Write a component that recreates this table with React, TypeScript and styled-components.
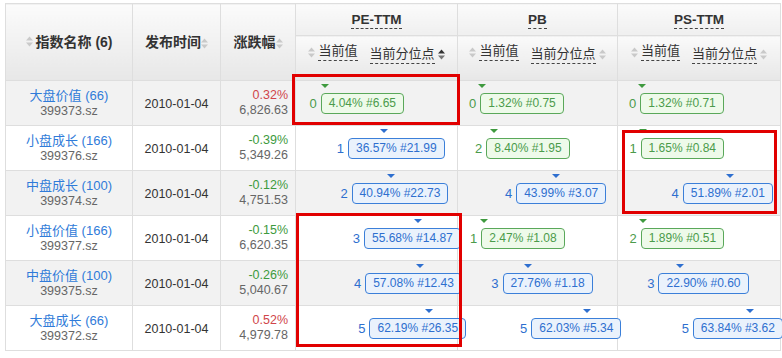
import React from 'react';
import styled, { createGlobalStyle } from 'styled-components';

const Global = createGlobalStyle`
  html, body { margin: 0; padding: 0; background: #fff; }
  body { font-family: "Liberation Sans", "Noto Sans CJK SC", Arial, sans-serif; color: #333; }
`;

const Page = styled.div`
  position: relative;
  width: 782px;
  height: 358px;
  padding: 3px 0 0 5px;
  box-sizing: border-box;
  overflow: hidden;
`;

const Table = styled.table`
  border-collapse: collapse;
  table-layout: fixed;
  width: 775px;
  font-size: 13px;
`;

const HeadCell = styled.th<{ $tall?: boolean }>`
  border: 1px solid #dedede;
  background: linear-gradient(180deg, #fbfbfb 0%, ${p => (p.$tall ? '#e7e7e7' : '#efefef')} 100%);
  font-weight: bold;
  font-size: 14px;
  color: #333;
  height: ${p => (p.$tall ? '76px' : '31px')};
  padding: 0;
  text-align: center;
  vertical-align: middle;
  white-space: nowrap;
  line-height: 18px;
`;

const GroupTitle = styled.span`
  font-size: 13.5px;
  border-bottom: 1px dashed #444;
  padding-bottom: 1px;
`;

const SubHeadCell = styled.th`
  border: 1px solid #dedede;
  border-top: 1px solid #e2e2e2;
  background: linear-gradient(180deg, #fafafa 0%, #e7e7e7 100%);
  font-weight: normal;
  font-size: 13px;
  color: #333;
  height: 44px;
  padding: 7px 0 0;
  box-sizing: border-box;
  text-align: center;
  vertical-align: top;
  white-space: nowrap;
  line-height: 16px;
`;

const SubLabel = styled.span`
  display: inline-block;
  border-bottom: 1px dashed #444;
  padding-bottom: 1px;
`;

const SortWrap = styled.span`
  display: inline-flex;
  align-items: center;
  gap: 3px;
  margin: 0 6px;
`;

const Row = styled.tr<{ $alt: boolean }>`
  background: ${p => (p.$alt ? '#f2f2f2' : '#fff')};
`;

const Cell = styled.td<{ $align?: string }>`
  border: 1px solid #dedede;
  height: 44px;
  padding: 0 ${p => (p.$align === 'right' ? '7px' : '0')} 0 0;
  text-align: ${p => p.$align || 'center'};
  vertical-align: middle;
  white-space: nowrap;
`;

const MetricCell = styled.td`
  border: 1px solid #dedede;
  height: 44px;
  padding: 0;
  vertical-align: middle;
  white-space: nowrap;
  overflow: visible;
`;

const NameLink = styled.div`
  color: #2f7bd9;
  font-size: 13px;
  line-height: 16px;
`;

const Code = styled.div`
  color: #666;
  font-size: 12.5px;
  line-height: 15px;
`;

const DateText = styled.span`
  font-size: 12.5px;
  color: #333;
`;

const Change = styled.div<{ $up: boolean }>`
  color: ${p => (p.$up ? '#d0454a' : '#3d9a3d')};
  font-size: 12.5px;
  line-height: 15px;
`;

const Level = styled.div`
  color: #666;
  font-size: 12.5px;
  line-height: 15px;
`;

const Marker = styled.div`
  display: flex;
  align-items: center;
`;

const Rank = styled.span<{ $low: boolean }>`
  color: ${p => (p.$low ? '#4b9b4b' : '#2e6fcf')};
  font-size: 13px;
  margin-right: 4px;
`;

const Badge = styled.span<{ $low: boolean }>`
  position: relative;
  display: inline-block;
  height: 21px;
  line-height: 19px;
  box-sizing: border-box;
  padding: 0 7px;
  border: 1px solid ${p => (p.$low ? '#5aa85a' : '#3b7fd9')};
  background: ${p => (p.$low ? '#eefaea' : '#eaf2fc')};
  color: ${p => (p.$low ? '#4b9b4b' : '#2e6fcf')};
  border-radius: 4px;
  font-size: 12px;
`;

const Arrow = styled.span<{ $low: boolean }>`
  position: absolute;
  top: -10px;
  width: 0;
  height: 0;
  border-left: 4px solid transparent;
  border-right: 4px solid transparent;
  border-top: 4px solid ${p => (p.$low ? '#3f9a3f' : '#2e6fcf')};
  transform: translateX(-50%);
`;

const Annotation = styled.div`
  position: absolute;
  border: 3px solid #e10000;
  box-sizing: border-box;
  pointer-events: none;
`;

const SortIcon = ({ active }: { active?: boolean }) => (
  <svg width="7" height="11" viewBox="0 0 7 11" style={{ display: 'inline-block', verticalAlign: 'middle' }}>
    <polygon points="0,4.5 3.5,0.5 7,4.5" fill={active ? '#333' : '#c9c9c9'} />
    <polygon points="0,6.5 7,6.5 3.5,10.5" fill={active ? '#777' : '#c9c9c9'} />
  </svg>
);

type M = [number, number, string];
interface RowData {
  name: string;
  n: number;
  code: string;
  chg: string;
  up: boolean;
  val: string;
  pe: M;
  pb: M;
  ps: M;
}

const rows: RowData[] = [
  { name: '大盘价值', n: 66, code: '399373.sz', chg: '0.32%', up: true, val: '6,826.63', pe: [0, 4.04, '6.65'], pb: [0, 1.32, '0.75'], ps: [0, 1.32, '0.71'] },
  { name: '小盘成长', n: 166, code: '399376.sz', chg: '-0.39%', up: false, val: '5,349.26', pe: [1, 36.57, '21.99'], pb: [2, 8.4, '1.95'], ps: [1, 1.65, '0.84'] },
  { name: '中盘成长', n: 100, code: '399374.sz', chg: '-0.12%', up: false, val: '4,751.53', pe: [2, 40.94, '22.73'], pb: [4, 43.99, '3.07'], ps: [4, 51.89, '2.01'] },
  { name: '小盘价值', n: 166, code: '399377.sz', chg: '-0.15%', up: false, val: '6,620.35', pe: [3, 55.68, '14.87'], pb: [1, 2.47, '1.08'], ps: [2, 1.89, '0.51'] },
  { name: '中盘价值', n: 100, code: '399375.sz', chg: '-0.26%', up: false, val: '5,040.67', pe: [4, 57.08, '12.43'], pb: [3, 27.76, '1.18'], ps: [3, 22.9, '0.60'] },
  { name: '大盘成长', n: 66, code: '399372.sz', chg: '0.52%', up: true, val: '4,979.78', pe: [5, 62.19, '26.35'], pb: [5, 62.03, '5.34'], ps: [5, 63.84, '3.62'] },
];

const MetricValue = ({ m }: { m: M }) => {
  const [rank, pct, v] = m;
  const low = pct < 20;
  return (
    <MetricCell>
      <Marker style={{ marginLeft: `${10 + pct * 0.84}px` }}>
        <Rank $low={low}>{rank}</Rank>
        <Badge $low={low}>
          <Arrow $low={low} style={{ left: `${pct}%` }} />
          {pct.toFixed(2)}% #{v}
        </Badge>
      </Marker>
    </MetricCell>
  );
};

const SubHead = ({ activeIdx }: { activeIdx?: boolean }) => (
  <SubHeadCell>
    <SortWrap>
      <SortIcon />
      <SubLabel>当前值</SubLabel>
    </SortWrap>
    <SortWrap>
      <SubLabel>当前分位点</SubLabel>
      <SortIcon active={activeIdx} />
    </SortWrap>
  </SubHeadCell>
);

export default function App() {
  return (
    <Page>
      <Global />
      <Table>
        <colgroup>
          <col style={{ width: 127 }} />
          <col style={{ width: 88 }} />
          <col style={{ width: 75 }} />
          <col style={{ width: 162 }} />
          <col style={{ width: 160 }} />
          <col style={{ width: 163 }} />
        </colgroup>
        <thead>
          <tr>
            <HeadCell rowSpan={2} $tall>
              <SortWrap>
                <SortIcon />
                指数名称 (6)
              </SortWrap>
            </HeadCell>
            <HeadCell rowSpan={2} $tall>
              发布时间<SortIcon />
            </HeadCell>
            <HeadCell rowSpan={2} $tall>
              涨跌幅<SortIcon />
            </HeadCell>
            <HeadCell><GroupTitle>PE-TTM</GroupTitle></HeadCell>
            <HeadCell><GroupTitle>PB</GroupTitle></HeadCell>
            <HeadCell><GroupTitle>PS-TTM</GroupTitle></HeadCell>
          </tr>
          <tr>
            <SubHead activeIdx />
            <SubHead />
            <SubHead />
          </tr>
        </thead>
        <tbody>
          {rows.map((r, i) => (
            <Row key={r.code} $alt={i % 2 === 0}>
              <Cell>
                <NameLink>{r.name} ({r.n})</NameLink>
                <Code>{r.code}</Code>
              </Cell>
              <Cell>
                <DateText>2010-01-04</DateText>
              </Cell>
              <Cell $align="right">
                <Change $up={r.up}>{r.chg}</Change>
                <Level>{r.val}</Level>
              </Cell>
              <MetricValue m={r.pe} />
              <MetricValue m={r.pb} />
              <MetricValue m={r.ps} />
            </Row>
          ))}
        </tbody>
      </Table>
      <Annotation style={{ left: 292, top: 74, width: 168, height: 51 }} />
      <Annotation style={{ left: 622, top: 130, width: 155, height: 84 }} />
      <Annotation style={{ left: 296, top: 213, width: 166, height: 134 }} />
    </Page>
  );
}
